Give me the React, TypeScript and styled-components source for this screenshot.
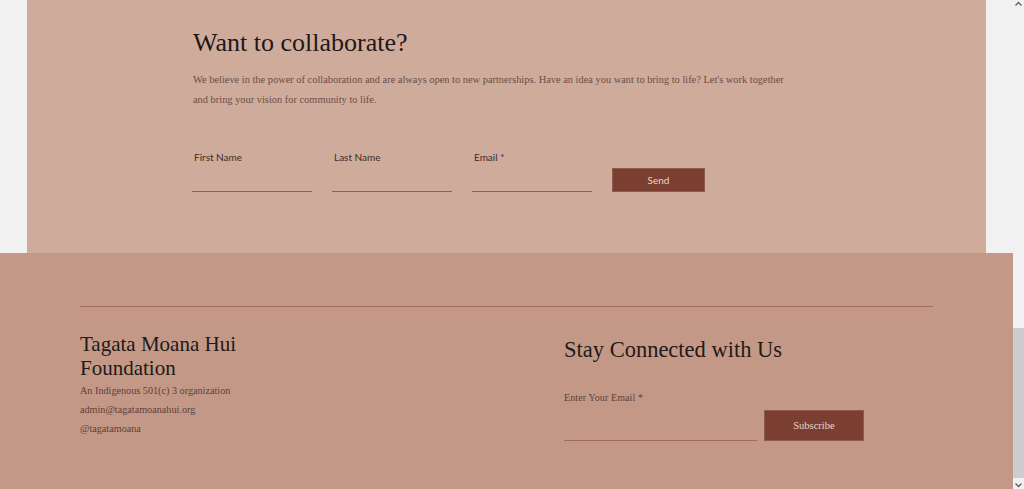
import React from "react";
import styled, { createGlobalStyle } from "styled-components";

const Global = createGlobalStyle`
  html, body { margin: 0; padding: 0; height: 489px; overflow: hidden; background: #f1f1f1; }
  #root { height: 489px; }
  * { box-sizing: border-box; }
`;

const Page = styled.div`
  display: flex;
  width: 1024px;
  height: 489px;
  overflow: hidden;
  background: #f1f1f1;
`;

const Main = styled.div`
  width: 1013px;
  display: flex;
  flex-direction: column;
`;

const Collab = styled.section`
  margin-left: 27px;
  width: 959px;
  height: 253px;
  background: #cfab9c;
  padding: 27px 0 0 166px;
`;

const Heading = styled.h2`
  margin: 0;
  font-family: "Liberation Serif", serif;
  font-weight: 400;
  font-size: 26px;
  line-height: 32px;
  color: #1f1816;
`;

const Intro = styled.p`
  margin: 11px 0 0;
  width: 600px;
  font-family: "Liberation Serif", serif;
  font-size: 10.4px;
  line-height: 20px;
  color: #6a4e45;
`;

const FormRow = styled.div`
  display: flex;
  align-items: flex-end;
  gap: 20px;
  margin: 40px 0 0 -1px;
`;

const Field = styled.label`
  display: flex;
  flex-direction: column;
  width: 120px;
`;

const SansLabel = styled.span`
  font-family: "Lato", sans-serif;
  font-size: 10px;
  line-height: 14px;
  padding-left: 2px;
  color: #3b2b27;
`;

const Line = styled.span<{ $h: number; $color: string }>`
  display: block;
  height: ${(p) => p.$h}px;
  border-bottom: 1px solid ${(p) => p.$color};
`;

const Button = styled.button<{ $w: number; $h: number; $serif?: boolean }>`
  width: ${(p) => p.$w}px;
  height: ${(p) => p.$h}px;
  border: 1px solid #8e5a4c;
  background: #7a3f31;
  color: #ecd3c9;
  font-family: ${(p) => (p.$serif ? '"Liberation Serif", serif' : '"Lato", sans-serif')};
  font-size: ${(p) => (p.$serif ? 10.5 : 10)}px;
  padding: 0;
  cursor: pointer;
`;

const Footer = styled.footer`
  height: 236px;
  background: #c49886;
  padding: 53px 80px 0 80px;
`;

const Divider = styled.hr`
  margin: 0;
  border: none;
  border-top: 1px solid #a36d5d;
  height: 0;
`;

const Columns = styled.div`
  display: grid;
  grid-template-columns: 484px 1fr;
`;

const Left = styled.div`
  padding-top: 25px;
`;

const OrgName = styled.h3`
  margin: 0 0 1px;
  width: 190px;
  font-family: "Liberation Serif", serif;
  font-weight: 400;
  font-size: 21px;
  line-height: 24px;
  color: #221a18;
`;

const Info = styled.div`
  font-family: "Liberation Serif", serif;
  font-size: 10.2px;
  line-height: 19px;
  color: #5c4038;
`;

const Right = styled.div`
  padding-top: 29px;
`;

const StayTitle = styled.h3`
  margin: 0;
  font-family: "Liberation Serif", serif;
  font-weight: 400;
  font-size: 22.5px;
  line-height: 28px;
  color: #221a18;
`;

const SubRow = styled.div`
  display: flex;
  align-items: flex-end;
  gap: 7px;
  margin-top: 27px;
`;

const SubField = styled.label`
  display: flex;
  flex-direction: column;
  width: 193px;
`;

const SerifLabel = styled.span`
  font-family: "Liberation Serif", serif;
  font-size: 10px;
  line-height: 14px;
  letter-spacing: 0.1px;
  color: #5c4038;
`;

const Scrollbar = styled.div`
  width: 11px;
  height: 489px;
  display: flex;
  flex-direction: column;
  align-items: center;
  background: #f1f1f1;
`;

const Arrow = styled.svg`
  display: block;
  flex: none;
`;

const Thumb = styled.div`
  width: 11px;
  height: 150px;
  margin-top: 320px;
  background: #cdcdcd;
`;

const Spacer = styled.div`
  flex: 1;
`;

export default function App() {
  return (
    <>
      <Global />
      <Page>
        <Main>
          <Collab>
            <Heading>Want to collaborate?</Heading>
            <Intro>
              We believe in the power of collaboration and are always open to new partnerships. Have an idea you
              want to bring to life? Let's work together and bring your vision for community to life.
            </Intro>
            <FormRow>
              <Field>
                <SansLabel>First Name</SansLabel>
                <Line $h={28} $color="#7a6862" />
              </Field>
              <Field>
                <SansLabel>Last Name</SansLabel>
                <Line $h={28} $color="#7a6862" />
              </Field>
              <Field>
                <SansLabel>Email *</SansLabel>
                <Line $h={28} $color="#7a6862" />
              </Field>
              <Button $w={93} $h={24}>Send</Button>
            </FormRow>
          </Collab>
          <Footer>
            <Divider />
            <Columns>
              <Left>
                <OrgName>Tagata Moana Hui Foundation</OrgName>
                <Info>An Indigenous 501(c) 3 organization</Info>
                <Info>admin@tagatamoanahui.org</Info>
                <Info>@tagatamoana</Info>
              </Left>
              <Right>
                <StayTitle>Stay Connected with Us</StayTitle>
                <SubRow>
                  <SubField>
                    <SerifLabel>Enter Your Email *</SerifLabel>
                    <Line $h={36} $color="#a16c5c" />
                  </SubField>
                  <Button $w={100} $h={31} $serif>Subscribe</Button>
                </SubRow>
              </Right>
            </Columns>
          </Footer>
        </Main>
        <Scrollbar>
          <Arrow width="9" height="8" viewBox="0 0 9 8">
            <path d="M1.5 5.5 L4.5 2.5 L7.5 5.5" fill="none" stroke="#606060" strokeWidth="1.4" />
          </Arrow>
          <Thumb />
          <Spacer />
          <Arrow width="9" height="8" viewBox="0 0 9 8">
            <path d="M1.5 2.5 L4.5 5.5 L7.5 2.5" fill="none" stroke="#606060" strokeWidth="1.4" />
          </Arrow>
        </Scrollbar>
      </Page>
    </>
  );
}
